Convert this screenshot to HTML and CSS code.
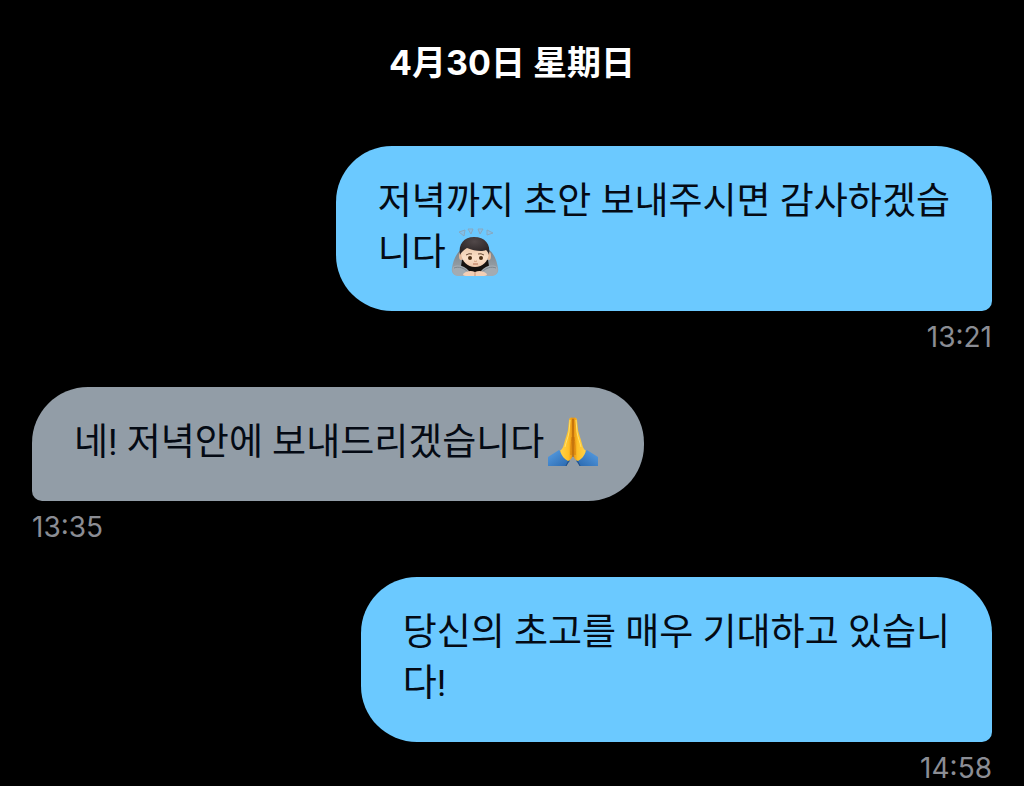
FILE: index.html
```html
<!DOCTYPE html>
<html lang="ko">
<head>
  <meta charset="UTF-8">
  <meta name="viewport" content="width=device-width, initial-scale=1.0">
  <title>Messages</title>
  <link rel="stylesheet" href="styles.css">
</head>
<body>
  <main class="chat">
    <h1 class="date" lang="zh">4月30日 星期日</h1>

    <!-- Sent -->
    <div class="message sent">
      <p class="bubble">저녁까지 초안 보내주시면 감사하겠습<br>니다<svg class="emoji" viewBox="0 0 50 50" role="img" aria-label="Person bowing">
        <defs>
          <linearGradient id="sleeve" x1="0" y1="0" x2="0" y2="1">
            <stop offset="0" stop-color="#78828a"/>
            <stop offset="1" stop-color="#a3abb1"/>
          </linearGradient>
          <radialGradient id="hair" cx=".5" cy=".25" r=".7">
            <stop offset="0" stop-color="#514849"/>
            <stop offset="1" stop-color="#292324"/>
          </radialGradient>
          <linearGradient id="skin" x1="0" y1="0" x2="0" y2="1">
            <stop offset="0" stop-color="#e9c5a6"/>
            <stop offset=".6" stop-color="#fbe0c8"/>
            <stop offset="1" stop-color="#efc6aa"/>
          </linearGradient>
        </defs>
        <g fill="#7fc0ec" stroke="#86a9c2" stroke-width="1" stroke-linejoin="round">
          <path d="M9 5l6-2-1 6z"/>
          <path d="M18 2h5l-2 5z"/>
          <path d="M28 2h5l-3 5z"/>
          <path d="M37 3l6 3-6 2z"/>
        </g>
        <path d="M12 22C6 26 3 34 2 41c-1 5 2 8 7 8h32c5 0 8-3 7-8-1-7-4-15-10-19z" fill="url(#sleeve)"/>
        <path d="M12 33l-1 6 7 8h14l7-8-1-6z" fill="#15110f"/>
        <ellipse cx="11" cy="29" rx="2" ry="4" fill="#e5b99a"/>
        <ellipse cx="39" cy="29" rx="2" ry="4" fill="#e5b99a"/>
        <path d="M11 24c0 9 5 16 14 16s14-7 14-16l-4-6H15z" fill="url(#skin)"/>
        <path d="M10 28C8 17 14 10 24 10c11 0 17 7 15 18-1-3-2-4-3-5-4 2-12 1-19-2-3 2-6 4-7 7z" fill="url(#hair)"/>
        <path d="M16 28q3-2 6-1M28 27q3-1 6 1" stroke="#6a4b36" fill="none"/>
        <ellipse cx="20" cy="31" rx="2" ry="2" fill="#4d2f14"/>
        <ellipse cx="31" cy="31" rx="2" ry="2" fill="#4d2f14"/>
        <path d="M24 34q1 1 3 0" stroke="#d39d7b" fill="none"/>
        <path d="M23 37h5" stroke="#b66e52" fill="none"/>
        <path d="M3 40c5-3 12-1 16 4l-2 5H9c-5 0-8-4-6-9zM47 40c-5-3-12-1-16 4l2 5h8c5 0 8-4 6-9z" fill="#a3abb2"/>
        <path d="M4 41c5-2 10 0 14 4M46 41c-5-2-10 0-14 4" stroke="#7e878e" fill="none"/>
        <path d="M13 47c3-3 8-4 12-2 4-2 9-1 12 2 0 1-1 2-3 2H16c-2 0-3-1-3-2z" fill="#f3cfb6"/>
        <path d="M25 45v4" stroke="#c99378"/>
      </svg></p>
      <time class="time" datetime="13:21">13:21</time>
    </div>

    <!-- Received -->
    <div class="message received">
      <p class="bubble">네! 저녁안에 보내드리겠습니다<svg class="emoji" viewBox="0 0 50 50" role="img" aria-label="Folded hands">
        <defs>
          <linearGradient id="hand" x1="0" y1="0" x2="1" y2="0">
            <stop offset="0" stop-color="#ffd34a"/>
            <stop offset=".65" stop-color="#ffc027"/>
            <stop offset="1" stop-color="#e18b10"/>
          </linearGradient>
          <linearGradient id="cuff" x1="0" y1="0" x2="1" y2="1">
            <stop offset="0" stop-color="#5aa0e4"/>
            <stop offset="1" stop-color="#2766ad"/>
          </linearGradient>
          <g id="half">
            <path d="M0 40l11-7 11 11-4 5H0z" fill="url(#cuff)"/>
            <path d="M12 34l9 9-3 6" stroke="#244c7e" stroke-width="1" fill="none"/>
            <path d="M25 1c-2-1-4 0-4 2l-1 10c-1 5-3 9-4 14-1 4-2 5-4 7 2 5 4 8 8 10 3-1 5-4 5-8z" fill="url(#hand)"/>
            <path d="M22 3l-1 12c-1 6-3 10-4 15" stroke="#ffe16c" stroke-width="1" fill="none"/>
            <path d="M24 20c-1 6-1 12-1 18" stroke="#d57d0c" stroke-width="1" fill="none"/>
          </g>
        </defs>
        <use href="#half"/>
        <use href="#half" transform="translate(50 0) scale(-1 1)"/>
        <path d="M25 2v38" stroke="#a95b08" stroke-width="1"/>
      </svg></p>
      <time class="time" datetime="13:35">13:35</time>
    </div>

    <!-- Sent -->
    <div class="message sent">
      <p class="bubble">당신의 초고를 매우 기대하고 있습니<br>다!</p>
      <time class="time" datetime="14:58">14:58</time>
    </div>
  </main>
</body>
</html>
```

FILE: styles.css
```css
* {
  box-sizing: border-box;
}
body {
  margin: 0;
  background: #000;
  font-family: Roboto, "Noto Sans CJK KR", sans-serif;
}
.chat {
  display: flex;
  flex-direction: column;
  gap: 32px;
  padding: 40px 32px 0;
}
.date {
  margin: 0 0 28px;
  color: #fff;
  font-family: Inter, "Noto Sans CJK SC", sans-serif;
  font-size: 34px;
  font-weight: 700;
  line-height: 46px;
  text-align: center;
}
.message {
  display: flex;
  flex-direction: column;
}
.sent {
  align-items: flex-end;
}
.received {
  align-items: flex-start;
}
.bubble {
  margin: 0;
  padding: 30px 42px 33px;
  border-radius: 56px;
  color: #040a14;
  font-size: 37px;
  line-height: 51px;
}
.sent .bubble {
  background: #6bc9ff;
  border-bottom-right-radius: 10px;
}
.received .bubble {
  background: #929da7;
  border-bottom-left-radius: 10px;
}
.emoji {
  width: 50px;
  height: 50px;
  margin: 0 4px;
  vertical-align: -12px;
}
.time {
  padding-top: 8px;
  color: #8b8d94;
  font-family: Inter, sans-serif;
  font-size: 28px;
  line-height: 36px;
}
```
